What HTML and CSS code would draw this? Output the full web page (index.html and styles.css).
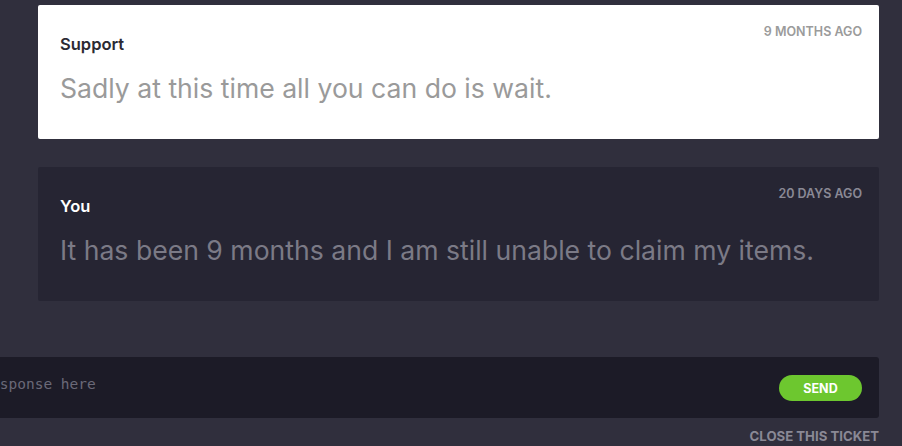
FILE: index.html
```html
<!DOCTYPE html>
<html>
<head>
<meta charset="utf-8">
<link rel="stylesheet" href="styles.css">
</head>
<body>
<div class="page">
  <div class="thread">
    <div class="card card-light">
      <div class="meta">
        <div class="name">Support</div>
        <div class="time">9 MONTHS AGO</div>
      </div>
      <div class="msg">Sadly at this time all you can do is wait.</div>
    </div>
    <div class="card card-dark">
      <div class="meta">
        <div class="name">You</div>
        <div class="time">20 DAYS AGO</div>
      </div>
      <div class="msg">It has been 9 months and I am still unable to claim my items.</div>
    </div>
  </div>
  <div class="reply">
    <input class="reply-input" type="text" placeholder="Type your response here">
    <button class="send">SEND</button>
  </div>
  <div class="close-row"><span class="close">CLOSE THIS TICKET</span></div>
</div>
</body>
</html>
```
FILE: styles.css
```css
* { box-sizing: border-box; }
html, body { margin: 0; padding: 0; }
body {
  background: #302f3d;
  font-family: Inter, "Liberation Sans", sans-serif;
  width: 902px;
  height: 446px;
  overflow: hidden;
}
.page {
  padding: 5px 23px 0 38px;
}
.thread {
  display: flex;
  flex-direction: column;
  gap: 28px;
}
.card {
  height: 134px;
  padding: 20px 17px 0 22px;
  border-radius: 2px;
}
.card-light { background: #ffffff; }
.card-dark { background: #262533; }
.meta {
  display: flex;
  justify-content: space-between;
  align-items: flex-start;
}
.name {
  margin-top: 10px;
  font-size: 16.5px;
  line-height: 18px;
  font-weight: 600;
}
.card-light .name { color: #2b2a33; }
.card-dark .name { color: #ffffff; }
.time {
  font-size: 12.5px;
  line-height: 14px;
  font-weight: 600;
}
.card-light .time { color: #9b9b9b; }
.card-dark .time { color: #8a8995; }
.msg {
  margin-top: 19px;
  font-size: 26.6px;
  line-height: 32px;
}
.card-light .msg { color: #9a9a9a; }
.card-dark .msg { color: #7b7a86; }
.reply {
  margin-top: 56px;
  margin-left: -165px;
  height: 61px;
  background: #1c1b27;
  border-radius: 3px;
  display: flex;
  align-items: flex-start;
  padding: 0 17px 0 22px;
}
.reply-input {
  flex: 1;
  background: transparent;
  border: 0;
  outline: none;
  height: 54px;
  padding: 0;
  font-family: "DejaVu Sans Mono", monospace;
  font-size: 14.5px;
  color: #ddd;
}
.reply-input::placeholder { color: #6a6978; }
.send {
  margin-top: 18px;
  width: 83px;
  height: 26px;
  border: 0;
  border-radius: 13px;
  background: #6dc72f;
  color: #ffffff;
  font-family: Inter, "Liberation Sans", sans-serif;
  font-weight: 700;
  font-size: 12.5px;
  padding: 0;
}
.close-row {
  display: flex;
  justify-content: flex-end;
  margin-top: 10px;
}
.close {
  font-size: 13.2px;
  line-height: 16px;
  font-weight: 700;
  color: #8a8995;
}
```
